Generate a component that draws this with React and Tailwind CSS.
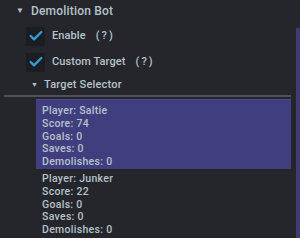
import { Check } from "lucide-react";

const players = [
  { name: "Saltie", score: 74, goals: 0, saves: 0, demos: 0, selected: true },
  { name: "Junker", score: 22, goals: 0, saves: 0, demos: 0, selected: false },
];

function Checkbox({ label }) {
  return (
    <div className="flex h-[26px] items-center">
      <div className="flex h-[19px] w-[19px] items-center justify-center bg-[#1c1d22]">
        <Check size={16} strokeWidth={3.5} className="text-[#2f9fd8]" />
      </div>
      <span className="ml-[7px] text-[11px] font-medium tracking-[0.1px]">{label}</span>
      <span className="ml-[10px] text-[11px] font-medium tracking-[2px]">(?)</span>
    </div>
  );
}

export default function App() {
  return (
    <div
      className="flex h-[238px] w-[300px] overflow-hidden bg-[#25262b] text-[#b6c2cb]"
      style={{ fontFamily: "Roboto, sans-serif" }}
    >
      <div className="flex-1 pt-[3px]">
        <div className="flex h-[15px] items-center pl-[16px]">
          <span className="text-[8px]">▼</span>
          <span className="ml-[7px] text-[12px] font-medium tracking-[0.2px]">Demolition Bot</span>
        </div>
        <div className="mt-[5px] pl-[26px]">
          <Checkbox label="Enable" />
          <Checkbox label="Custom Target" />
        </div>
        <div className="mt-[4px] flex h-[13px] items-center pl-[31px]">
          <span className="text-[7px]">▼</span>
          <span className="ml-[6px] text-[11px] font-medium tracking-[0.2px]">Target Selector</span>
        </div>
        <div className="ml-[4px] mr-[5px] mt-[3px] h-[2px] bg-[#505158]" />
        <div className="ml-[36px] mr-[5px] mt-[2px] flex flex-col">
          {players.map((p) => (
            <div
              key={p.name}
              className={`flex flex-col px-[6px] text-[10.5px] font-medium leading-[12.8px] tracking-[0.3px] ${
                p.selected ? "mb-[3px] h-[70px] border-t border-[#4c4a8c] bg-[#403e7e] pt-[5px]" : "pt-[1px]"
              }`}
            >
              <span>Player: {p.name}</span>
              <span>Score: {p.score}</span>
              <span>Goals: {p.goals}</span>
              <span>Saves: {p.saves}</span>
              <span>Demolishes: {p.demos}</span>
            </div>
          ))}
        </div>
      </div>
      <div className="mt-[28px] w-[4px] bg-[#3e3c72]" />
    </div>
  );
}
